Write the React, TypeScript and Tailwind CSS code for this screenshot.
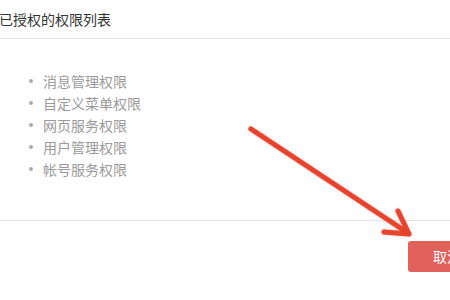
const items = ["消息管理权限", "自定义菜单权限", "网页服务权限", "用户管理权限", "帐号服务权限"];

export default function App() {
  return (
    <div
      className="relative h-[300px] w-[450px] overflow-hidden bg-white"
      style={{ fontFamily: '"Noto Sans CJK SC", "Liberation Sans", sans-serif' }}
    >
      <div className="flex h-[39px] items-center border-b border-[#e4e4e4] pl-0 -ml-[1px]">
        <span className="text-[14px] leading-none text-[#333]">已授权的权限列表</span>
      </div>
      <ul className="pt-[31px] pl-[43px] text-[14px] leading-[22px] text-[#9a9a9a]">
        {items.map((t) => (
          <li key={t} className="relative">
            <span className="absolute -left-[14px] top-[9px] h-[4px] w-[4px] rounded-full bg-[#aaa]" />
            {t}
          </li>
        ))}
      </ul>
      <div className="absolute left-0 right-0 top-[220px] border-t border-[#e4e4e4]" />
      <div className="absolute left-[408px] top-[241px] flex h-[31px] w-[60px] items-center rounded-[3px] bg-[#e0625b] pl-[25px] text-[14px] text-white">
        取消
      </div>
      <svg className="absolute left-0 top-0" width="450" height="300" viewBox="0 0 450 300">
        <g
          stroke="#e8432d"
          strokeWidth="5"
          strokeLinecap="round"
          strokeLinejoin="round"
          fill="none"
          style={{ filter: "drop-shadow(0 0 1px rgba(180,40,20,0.4))" }}
        >
          <line x1="251" y1="129" x2="408" y2="233" />
          <polyline points="398,211 409,234 384,232" />
        </g>
      </svg>
    </div>
  );
}
